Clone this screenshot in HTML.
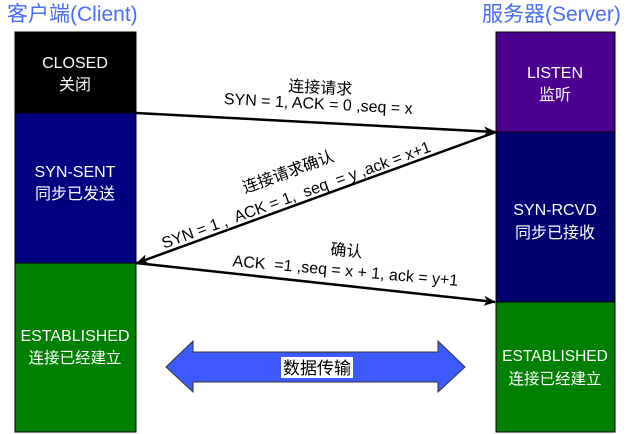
<!DOCTYPE html>
<html><head><meta charset="utf-8"><style>
body{margin:0;background:#fff;width:636px;height:434px;overflow:hidden}
svg{display:block}
text{font-family:"Liberation Sans","Noto Sans CJK SC",sans-serif}
</style></head><body>
<svg width="636" height="434" viewBox="0 0 636 434" xmlns="http://www.w3.org/2000/svg">
<defs>
<marker id="ah" viewBox="0 0 12 10" refX="11" refY="5" markerWidth="12" markerHeight="10" markerUnits="userSpaceOnUse" orient="auto">
<path d="M0,0 L12,5 L0,10 L3,5 Z" fill="#000"/>
</marker>
</defs>
<text x="7" y="21" font-size="21" fill="#4a6cf7">客户端(Client)</text>
<text x="482" y="21" font-size="21" fill="#4a6cf7">服务器(Server)</text>
<rect x="15" y="32" width="121" height="81" fill="#000" stroke="#000"/>
<rect x="15" y="113" width="121" height="150" fill="#000080" stroke="#000"/>
<rect x="15" y="263" width="121" height="169" fill="#008000" stroke="#000"/>
<rect x="496" y="32" width="119" height="100" fill="#4c0090" stroke="#000"/>
<rect x="496" y="132" width="119" height="170" fill="#000070" stroke="#000"/>
<rect x="496" y="302" width="119" height="130" fill="#008000" stroke="#000"/>
<g fill="#fff" font-size="16" text-anchor="middle">
<text x="75" y="68">CLOSED</text><text x="75" y="90">关闭</text>
<text x="75" y="177">SYN-SENT</text><text x="75" y="199">同步已发送</text>
<text x="75" y="341">ESTABLISHED</text><text x="75" y="363" font-size="15.5">连接已经建立</text>
<text x="555" y="78">LISTEN</text><text x="555" y="100">监听</text>
<text x="555" y="215">SYN-RCVD</text><text x="555" y="238">同步已接收</text>
<text x="555" y="361" font-size="15.5">ESTABLISHED</text><text x="555" y="384" font-size="15.5">连接已经建立</text>
</g>
<g stroke="#000" stroke-width="2.5" fill="none">
<line x1="136" y1="113" x2="495" y2="132" marker-end="url(#ah)"/>
<line x1="496" y1="132" x2="137" y2="263" marker-end="url(#ah)"/>
<line x1="136" y1="263" x2="495" y2="302" marker-end="url(#ah)"/>
</g>
<g font-size="16" fill="#000" text-anchor="middle">
<text x="320" y="93" transform="rotate(3 320 93)">连接请求</text>
<text x="318" y="109" transform="rotate(3 318 109)">SYN = 1, ACK = 0 ,seq = x</text>
<text x="290" y="177" transform="rotate(-20 290 177)">连接请求确认</text>
<text x="298" y="200" transform="rotate(-20 298 200)" xml:space="preserve">SYN = 1 ,  ACK = 1,  seq  = y ,ack = x+1</text>
<text x="346" y="256" transform="rotate(5 346 256)">确认</text>
<text x="345" y="276" transform="rotate(5 345 276)" xml:space="preserve">ACK  =1 ,seq = x + 1, ack = y+1</text>
</g>
<path d="M166,367 L193,341 L193,352 L438,352 L438,341 L465,367 L438,392 L438,382 L193,382 L193,392 Z" fill="#3d5afe" stroke="#333" stroke-width="1"/>
<rect x="281" y="357" width="72" height="21" fill="#fff"/>
<text x="317" y="374" font-size="17" text-anchor="middle" fill="#000">数据传输</text>
</svg>
</body></html>
